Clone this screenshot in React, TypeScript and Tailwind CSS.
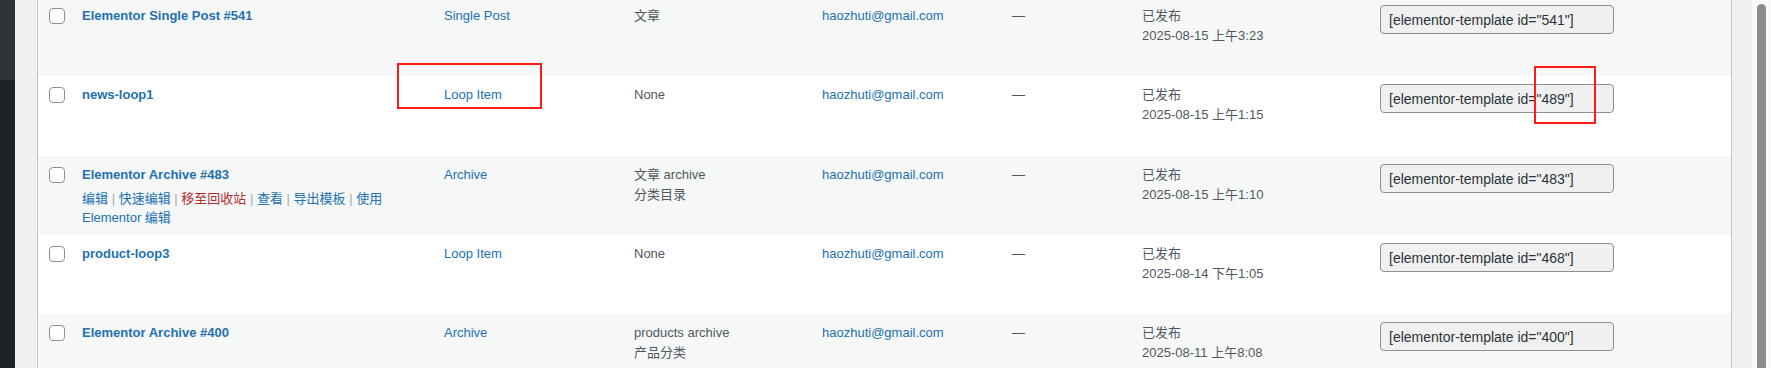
import React from "react";

type Row = {
    title: string;
    type: string;
    category: string[];
    date: string;
    id: string;
    striped: boolean;
    height: string;
    actions?: boolean;
};

const rows: Row[] = [
    { title: "Elementor Single Post #541", type: "Single Post", category: ["文章"], date: "2025-08-15 上午3:23", id: "541", striped: true, height: "h-[79px] mt-[-3px]" },
    { title: "news-loop1", type: "Loop Item", category: ["None"], date: "2025-08-15 上午1:15", id: "489", striped: false, height: "h-[80px]" },
    { title: "Elementor Archive #483", type: "Archive", category: ["文章 archive", "分类目录"], date: "2025-08-15 上午1:10", id: "483", striped: true, height: "h-[79px]", actions: true },
    { title: "product-loop3", type: "Loop Item", category: ["None"], date: "2025-08-14 下午1:05", id: "468", striped: false, height: "h-[79px]" },
    { title: "Elementor Archive #400", type: "Archive", category: ["products archive", "产品分类"], date: "2025-08-11 上午8:08", id: "400", striped: true, height: "h-[79px]" },
];

function Sep() {
    return <span className="text-[#a7aaad]"> | </span>;
}

function RowActions() {
    return (
        <div className="mt-[4px] whitespace-nowrap leading-[19px] text-[#2271b1]">
            <span>编辑</span>
            <Sep />
            <span>快速编辑</span>
            <Sep />
            <span className="text-[#b32d2e]">移至回收站</span>
            <Sep />
            <span>查看</span>
            <Sep />
            <span>导出模板</span>
            <Sep />
            <span>使用</span>
            <br />
            <span>Elementor 编辑</span>
        </div>
    );
}

function TableRow({ row }: { row: Row }) {
    return (
        <div className={`flex shrink-0 ${row.height} ${row.striped ? "bg-[#f6f7f7]" : "bg-white"}`}>
            <div className="w-[44px] shrink-0 pl-[11px] pt-[11px]">
                <div className="h-[16px] w-[16px] rounded-[4px] border border-[#8c8f94] bg-white" />
            </div>
            <div className="w-[362px] shrink-0 pt-[9px]">
                <div className="font-bold text-[#2271b1]">{row.title}</div>
                {row.actions && <RowActions />}
            </div>
            <div className="w-[190px] shrink-0 pt-[9px] text-[#2271b1]">{row.type}</div>
            <div className="w-[188px] shrink-0 pt-[9px] text-[#50575e]">
                {row.category.map((c) => (
                    <div key={c} className="leading-[19px] first:leading-[20px]">{c}</div>
                ))}
            </div>
            <div className="w-[190px] shrink-0 pt-[9px] text-[#2271b1]">haozhuti@gmail.com</div>
            <div className="w-[130px] shrink-0 pt-[9px] text-[#50575e]">—</div>
            <div className="w-[238px] shrink-0 pt-[9px] text-[#50575e]">
                <div>已发布</div>
                <div>{row.date}</div>
            </div>
            <div className="flex-1 pt-[8px]">
                <div className="flex h-[29px] w-[234px] items-center rounded-[4px] border border-[#8c8f94] bg-[#f0f0f1] px-[8px] text-[14px] text-[#2c3338]">
                    [elementor-template id="{row.id}"]
                </div>
            </div>
        </div>
    );
}

export default function App() {
    return (
        <div
            className="relative flex h-[368px] w-[1771px] overflow-hidden bg-[#f0f0f1] text-[13px] leading-[20px]"
            style={{ fontFamily: '"Liberation Sans", "Noto Sans CJK SC", sans-serif' }}
        >
            <div className="flex w-[15px] shrink-0 flex-col">
                <div className="h-[80px] bg-[#2c3338]" />
                <div className="flex-1 bg-[#1d2327]" />
            </div>
            <div className="w-[22px] shrink-0" />
            <div className="flex w-[1695px] shrink-0 flex-col border-x border-[#c3c4c7] bg-white">
                {rows.map((row) => (
                    <TableRow key={row.id} row={row} />
                ))}
                <div className="flex-1 bg-[#f6f7f7]" />
            </div>
            <div className="w-[20px] shrink-0" />
            <div className="flex w-[19px] shrink-0 justify-center bg-[#fafafa] pt-[4px]">
                <div className="h-full w-[9px] rounded-t-full bg-[#8c8c8c]" />
            </div>

            <div className="absolute left-[397px] top-[63px] h-[46px] w-[145px] border-2 border-[#ff1a1a]" />
            <div className="absolute left-[1534px] top-[66px] h-[58px] w-[62px] border-2 border-[#ff1a1a]" />
        </div>
    );
}
